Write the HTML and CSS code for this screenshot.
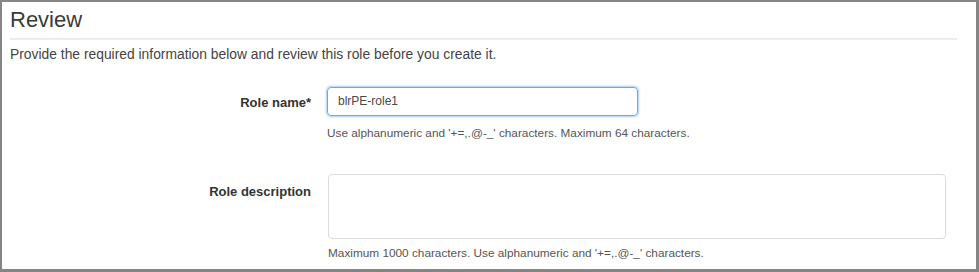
FILE: index.html
```
<!DOCTYPE html>
<html>
<head>
<meta charset="utf-8">
<link rel="stylesheet" href="styles.css">
</head>
<body>
<div class="frame">
  <h1 class="title">Review</h1>
  <p class="intro">Provide the required information below and review this role before you create it.</p>
  <div class="form">
    <div class="row">
      <label class="label label-name">Role name*</label>
      <div class="field">
        <div class="input">blrPE-role1</div>
        <div class="hint hint-name">Use alphanumeric and '+=,.@-_' characters. Maximum 64 characters.</div>
      </div>
    </div>
    <div class="row row-desc">
      <label class="label label-desc">Role description</label>
      <div class="field">
        <div class="textarea"></div>
        <div class="hint hint-desc">Maximum 1000 characters. Use alphanumeric and '+=,.@-_' characters.</div>
      </div>
    </div>
  </div>
</div>
</body>
</html>
```
FILE: styles.css
```
html, body {
  margin: 0;
  padding: 0;
  background: #ffffff;
}
body {
  font-family: "Liberation Sans", Arial, sans-serif;
  color: #444444;
}
.frame {
  box-sizing: border-box;
  width: 979px;
  height: 272px;
  border-top: 2px solid #858585;
  border-left: 2px solid #858585;
  border-right: 3px solid #858585;
  border-bottom: 3px solid #858585;
  padding: 5px 19px 0 8px;
  overflow: hidden;
}
.title {
  margin: 0;
  font-size: 22px;
  font-weight: normal;
  line-height: 25px;
  color: #3a3a3a;
  padding-bottom: 6px;
  border-bottom: 2px solid #ececec;
}
.intro {
  margin: 6px 0 0 0;
  font-size: 13.85px;
  line-height: 16px;
  color: #444444;
}
.form {
  margin-top: 25px;
}
.row {
  display: grid;
  grid-template-columns: 301px 1fr;
  column-gap: 16px;
}
.row-desc {
  margin-top: 34px;
}
.label {
  text-align: right;
  font-weight: bold;
  font-size: 13px;
  line-height: 15px;
  color: #333333;
}
.label-name {
  padding-top: 8px;
}
.label-desc {
  padding-top: 10px;
}
.input {
  box-sizing: border-box;
  width: 311px;
  height: 29px;
  border: 1px solid #6fa6ee;
  border-radius: 4px;
  box-shadow: 0 0 2px 1px rgba(102, 160, 240, 0.55);
  padding: 6px 0 0 10px;
  font-size: 12px;
  line-height: 15px;
  color: #4a4a4a;
}
.hint {
  font-size: 11.8px;
  line-height: 13px;
  color: #555555;
}
.hint-name {
  margin-top: 11px;
}
.textarea {
  box-sizing: border-box;
  width: 618px;
  height: 65px;
  margin-left: 1px;
  border: 1px solid #dcdcdc;
  border-radius: 4px;
}
.hint-desc {
  margin-top: 8px;
  margin-left: 1px;
}
```
